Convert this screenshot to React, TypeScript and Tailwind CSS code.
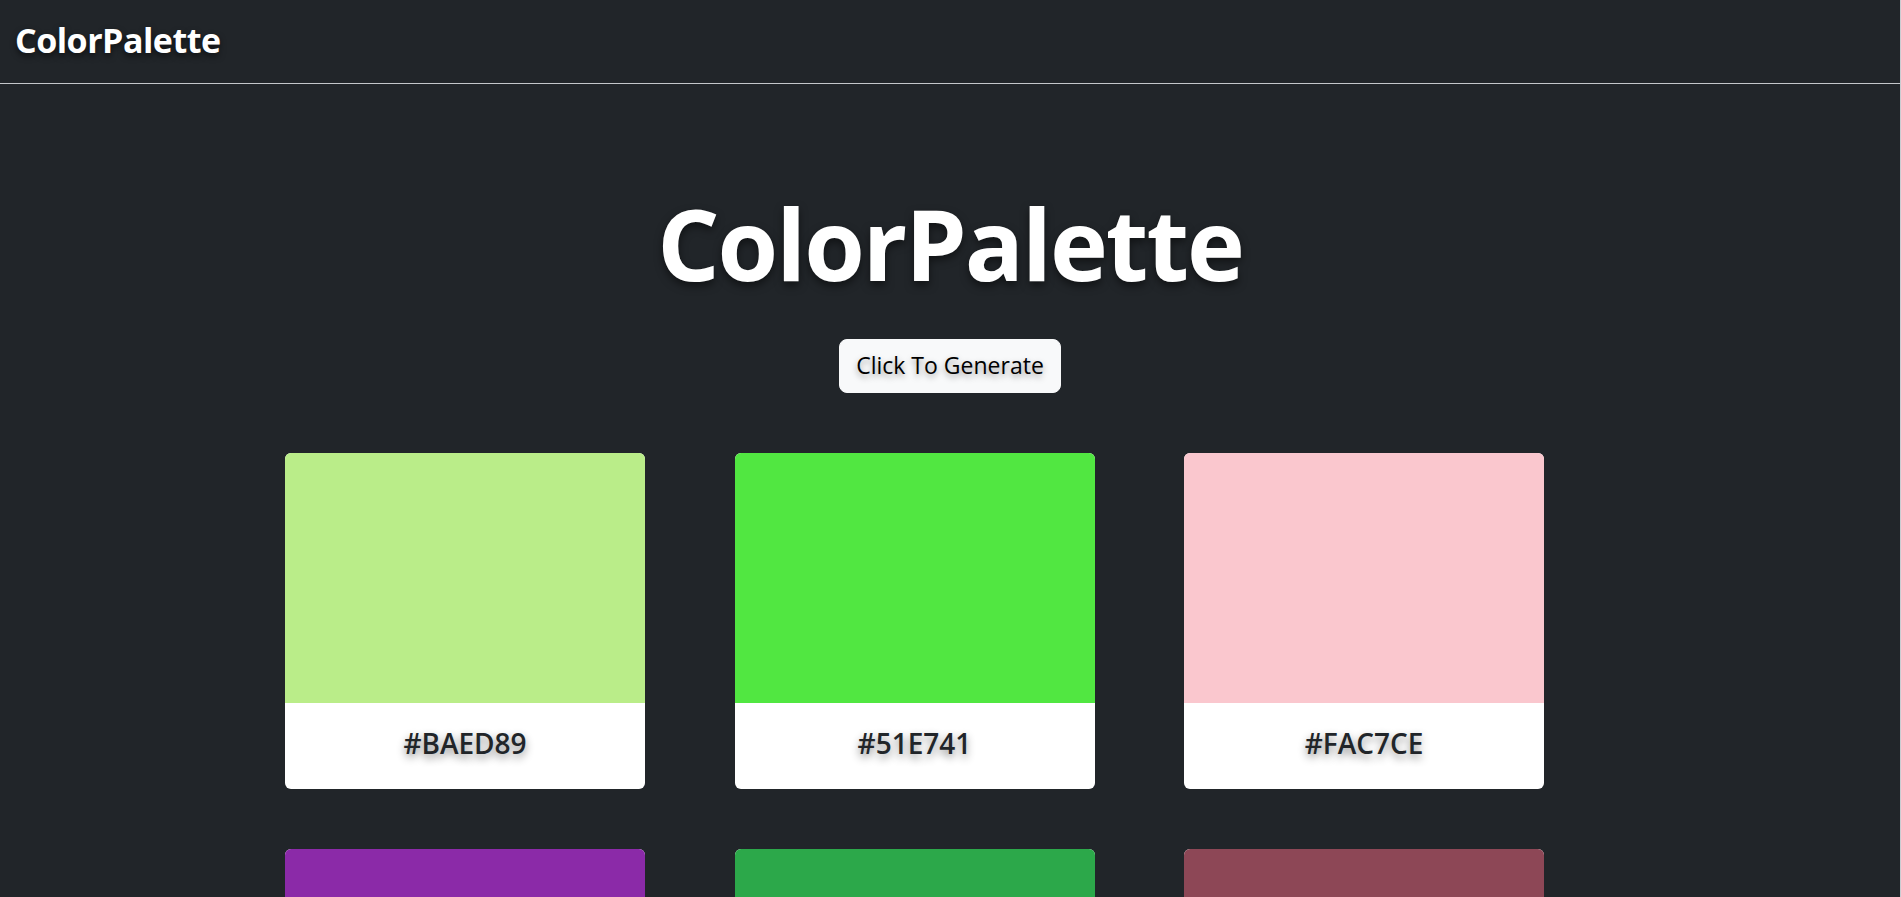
import React from "react";

const colors = ["#BAED89", "#51E741", "#FAC7CE", "#8B2AA8", "#2CA84A", "#8D4756"];

function Card({ hex }: { hex: string }) {
  return (
    <div className="w-[360px] rounded-md overflow-hidden bg-white">
      <div className="h-[250px]" style={{ backgroundColor: hex }} />
      <div className="h-[86px] flex items-center justify-center">
        <h3 className="text-[28px] font-semibold text-[#212529] leading-none [text-shadow:0_4px_8px_rgba(0,0,0,0.45)] pb-[6px]">
          {hex}
        </h3>
      </div>
    </div>
  );
}

export default function App() {
  return (
    <div className="min-h-screen bg-[#212529] border-r border-[#c9ccd1] font-['Open_Sans',sans-serif]">
      <nav className="h-[84px] border-b border-[#c4c7cb] flex items-center px-[15px]">
        <span className="text-[34px] font-bold text-white tracking-[-0.5px] [text-shadow:0_3px_6px_rgba(0,0,0,0.6)] pb-[2px]">
          ColorPalette
        </span>
      </nav>
      <main className="flex flex-col items-center pt-[101px]">
        <h1 className="text-[98px] leading-[1.2] font-bold text-white tracking-[-2px] [text-shadow:0_4px_8px_rgba(0,0,0,0.5)]">
          ColorPalette
        </h1>
        <button className="mt-[36px] h-[54px] px-4 rounded-lg bg-[#f8f9fa] border border-[#f8f9fa] text-[23px] text-black [text-shadow:0_3px_6px_rgba(0,0,0,0.4)]">
          Click To Generate
        </button>
      </main>
      <section className="pl-[285px] pt-[60px] pb-[60px] grid grid-cols-[360px_360px_360px] gap-x-[89.5px] gap-y-[60px]">
        {colors.map((c) => (
          <Card key={c} hex={c} />
        ))}
      </section>
    </div>
  );
}
